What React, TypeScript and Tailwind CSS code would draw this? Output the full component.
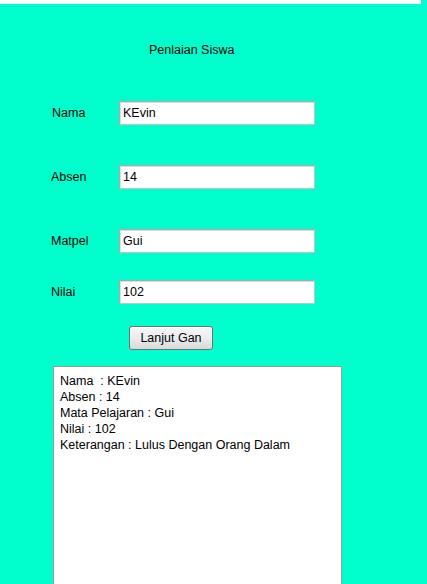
import React from "react";

const font = { fontFamily: '"Liberation Sans", Arial, sans-serif' };

function Row({ label, value, first }: { label: string; value: string; first?: boolean }) {
  return (
    <div className="flex h-[24px] items-center">
      <div
        className={
          first
            ? "w-[119px] shrink-0 pl-[52px] text-[12.5px] leading-[16px] text-black whitespace-nowrap"
            : "w-[119px] shrink-0 pl-[51px] text-[12.5px] leading-[16px] text-black whitespace-nowrap"
        }
      >
        {label}
      </div>
      <div className="flex h-[24px] w-[196px] shrink-0 items-center border border-[#a9a9a9] border-r-[#c4c4c4] border-b-[#c4c4c4] bg-white pl-[3px] shadow-[inset_1px_1px_0_#dcdcdc] text-[12.5px] text-black">
        {value}
      </div>
    </div>
  );
}

export default function App() {
  return (
    <div className="relative h-[584px] w-[427px] overflow-hidden bg-[#00ffcc]" style={font}>
      <div className="mr-[6px] h-[4px] bg-white" />
      <div className="mt-[38px] pl-[149px] text-[12.5px] leading-[16px] text-black">Penlaian Siswa</div>
      <div className="mt-[43px] flex flex-col">
        <Row label="Nama" value="KEvin" first />
        <div className="mt-[40px]">
          <Row label="Absen" value="14" />
        </div>
        <div className="mt-[40px]">
          <Row label="Matpel" value="Gui" />
        </div>
        <div className="mt-[27px]">
          <Row label="Nilai" value="102" />
        </div>
        <div className="mt-[22px] pl-[129px]">
          <div className="flex h-[24px] w-[84px] items-center justify-center rounded-[3px] border border-[#707070] bg-gradient-to-b from-[#f7f7f7] via-[#ececec] to-[#d9d9d9] text-[12.5px] text-black shadow-[inset_0_1px_0_#ffffff]">
            Lanjut Gan
          </div>
        </div>
        <div className="mt-[16px] ml-[53px] h-[300px] w-[289px] border border-[#9a9a9a] bg-white pl-[6px] pt-[6px] text-[12.5px] leading-[16px] text-black">
          <div className="whitespace-pre">Nama  : KEvin</div>
          <div>Absen : 14</div>
          <div>Mata Pelajaran : Gui</div>
          <div>Nilai : 102</div>
          <div>Keterangan : Lulus Dengan Orang Dalam</div>
        </div>
      </div>
    </div>
  );
}
